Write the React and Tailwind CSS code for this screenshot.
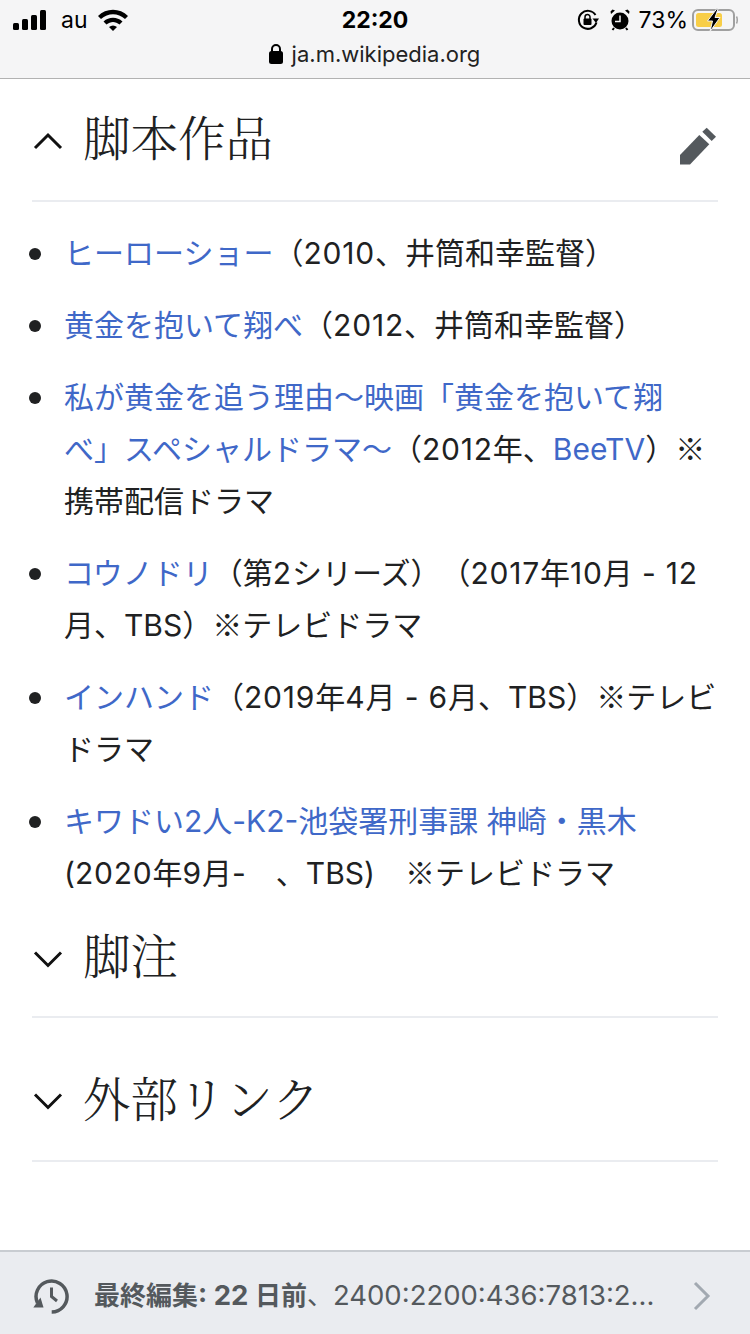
const body = { fontFamily: 'Inter,"Noto Sans CJK JP",sans-serif' };
const serif = { fontFamily: '"Noto Serif CJK JP","Liberation Serif","Noto Sans CJK JP",serif' };

function L({ children }) {
  return <span className="text-[#3f68c8]">{children}</span>;
}

function M() {
  return <span className="font-['Noto_Sans_CJK_JP'] leading-none">※</span>;
}

function N({ children }) {
  return <span className="tracking-[0.8px]">{children}</span>;
}

function Item({ children }) {
  return (
    <li className="flex">
      <span className="w-[35px] shrink-0 flex items-start pt-[21px]">
        <span className="w-[12px] h-[12px] rounded-full bg-[#202122] block" />
      </span>
      <div className="flex-1 text-[30px] leading-[52px] text-[#202122] [text-spacing-trim:space-all]">{children}</div>
    </li>
  );
}

function Chevron({ up }) {
  return (
    <svg width="32" height="20" viewBox="0 0 32 20" className="shrink-0 mt-[2px]">
      <path d={up ? "M3 17 L16 4 L29 17" : "M3 3.5 L16 16.5 L29 3.5"} fill="none" stroke="#111" strokeWidth="3" />
    </svg>
  );
}

function Heading({ up, title, edit, h }) {
  return (
    <div className={"mx-[32px] flex items-center border-b-2 border-[#eaecf0] " + h}>
      <Chevron up={up} />
      <h2 className="ml-[19px] pb-[7px] text-[47.5px] leading-none text-[#202122] font-light flex-1 [text-spacing-trim:space-all]" style={serif}>{title}</h2>
      {edit && (
        <svg width="36" height="38" viewBox="680 127 36 38" className="mr-[2px] mt-[12px]">
          <path d="M680 155 L699.3 135 L709.3 144.3 L690 164.5 L680 164.5 Z" fill="#54595d" />
          <path d="M702.3 131.7 L706.7 127.7 L716 136.7 L711.7 141 Z" fill="#54595d" />
        </svg>
      )}
    </div>
  );
}

export default function App() {
  return (
    <div className="w-[750px] h-[1334px] bg-white flex flex-col overflow-hidden" style={body}>
      <header className="h-[79px] shrink-0 bg-[#f5f5f6] border-b border-[#b2b2b2] pl-[13px] pr-[12px] text-black">
        <div className="h-[40px] flex items-center justify-between relative">
          <div className="flex items-center">
            <svg width="34" height="20" viewBox="0 0 34 20">
              <rect x="0" y="13" width="6" height="7" rx="1.5" fill="#000" />
              <rect x="9" y="9" width="6" height="11" rx="1.5" fill="#000" />
              <rect x="18" y="5" width="6" height="15" rx="1.5" fill="#000" />
              <rect x="27" y="0" width="6" height="20" rx="1.5" fill="#000" />
            </svg>
            <span className="ml-[14px] text-[23px] leading-none">au</span>
            <svg width="30" height="22" viewBox="0 0 30 22" className="ml-[10px]">
              <path d="M0 7 C8 -1.5 22 -1.5 30 7 L27 10 C20 3.5 10 3.5 3 10 Z" fill="#000" />
              <path d="M5.5 12.5 C11 7.5 19 7.5 24.5 12.5 L21.5 15.5 C17.5 12 12.5 12 8.5 15.5 Z" fill="#000" />
              <path d="M11 18 C13.5 16 16.5 16 19 18 L15 22 Z" fill="#000" />
            </svg>
          </div>
          <span className="absolute left-0 right-0 text-center text-[23px] leading-none font-bold pointer-events-none pr-[1px]">22:20</span>
          <div className="flex items-center">
            <svg width="22" height="22" viewBox="0 0 22 22">
              <path d="M18.5 6 A9 9 0 1 0 19.5 13.5" fill="none" stroke="#000" strokeWidth="2" />
              <path d="M15.5 9.5 L22 9.5 L19 14 Z" fill="#000" />
              <rect x="6.5" y="9.5" width="8" height="6.5" rx="1" fill="#000" />
              <path d="M8 10 V8 A2.5 2.5 0 0 1 13 8 V10" fill="none" stroke="#000" strokeWidth="1.5" />
            </svg>
            <svg width="20" height="22" viewBox="0 0 20 22" className="ml-[11px]">
              <circle cx="10" cy="12" r="8.5" fill="#000" />
              <path d="M10 6.5 V12.5 H5" fill="none" stroke="#f5f5f6" strokeWidth="1.5" />
              <path d="M1 5 L5 1.5 L2.5 0.5 L0.5 2.5 Z M19 5 L15 1.5 L17.5 0.5 L19.5 2.5 Z" fill="#000" />
              <path d="M4 19 L2.5 21 M16 19 L17.5 21" stroke="#000" strokeWidth="2" />
            </svg>
            <span className="ml-[9px] text-[23px] leading-none">73%</span>
            <svg width="46" height="24" viewBox="0 0 46 24" className="ml-[4px]">
              <rect x="1" y="2" width="41" height="20" rx="5" fill="none" stroke="#a0a0a0" strokeWidth="2" />
              <path d="M44.5 8.5 C45.5 10 45.5 14 44.5 15.5" fill="none" stroke="#a0a0a0" strokeWidth="1.5" />
              <rect x="4" y="5" width="26" height="14" rx="2.5" fill="#f8ce47" />
              <path d="M25 0.5 L15.5 13 H20.5 L18 23.5 L28 9.5 H23 L26 1 Z" fill="#000" stroke="#f5f5f6" strokeWidth="1" />
            </svg>
          </div>
        </div>
        <div className="flex items-center justify-center h-[28px] text-[22px] leading-none text-[#222] pr-[2px]">
          <svg width="14" height="20" viewBox="0 0 14 20" className="mr-[9px]">
            <rect x="0" y="7" width="14" height="13" rx="2.5" fill="#000" />
            <path d="M3 8 V5 A4 4 0 0 1 11 5 V8" fill="none" stroke="#000" strokeWidth="2" />
          </svg>
          <span>ja.m.wikipedia.org</span>
        </div>
      </header>

      <main className="flex-1">
        <Heading up title="脚本作品" edit h="h-[123px]" />
        <ul className="pl-[29px] pr-[32px] pt-[25px] flex flex-col gap-[20px]">
          <Item><L>ヒーローショー</L>（<N>2010</N>、井筒和幸監督）</Item>
          <Item><L>黄金を抱いて翔べ</L>（<N>2012</N>、井筒和幸監督）</Item>
          <Item><L>私が黄金を追う理由〜映画「黄金を抱いて翔べ」スペシャルドラマ〜</L>（<N>2012</N>年、<L>BeeTV</L>）<M />携帯配信ドラマ</Item>
          <Item><L>コウノドリ</L>（第<N>2</N>シリーズ）（<N>2017</N>年<N>10</N>月<N> - 12</N>月、TBS）<M />テレビドラマ</Item>
          <Item><L>インハンド</L>（<N>2019</N>年<N>4</N>月<N> - 6</N>月、TBS）<M />テレビドラマ</Item>
          <Item><L>キワドい2人-K2-池袋署刑事課 神崎・黒木</L><br />(<N>2020</N>年<N>9</N>月-　、TBS)　<M />テレビドラマ</Item>
        </ul>
        <Heading title="脚注" h="h-[119px]" />
        <div className="pt-[22px]">
          <Heading title="外部リンク" h="h-[122px]" />
        </div>
      </main>

      <footer className="h-[84px] shrink-0 bg-[#eaecf0] border-t-2 border-[#c8ccd1] flex items-center pt-[5px] pl-[33px] pr-[38px] text-[#54595d]">
        <svg width="38" height="36" viewBox="0 0 38 36" className="shrink-0">
          <path d="M4.5 25 A15.5 15.5 0 1 1 18.7 34" fill="none" stroke="#54595d" strokeWidth="3.5" />
          <path d="M0.3 29.5 L10.5 29.5 L7.5 19.5 Z" fill="#54595d" />
          <path d="M18.5 9.5 V18.5 L24 23" fill="none" stroke="#54595d" strokeWidth="3" />
        </svg>
        <div className="ml-[23px] flex-1 text-[26px] leading-none whitespace-nowrap">
          <b>最終編集<span className="text-[27.5px]">: 22 </span>日前</b>、<span className="text-[27.5px]">2400:2200:436:7813:2...</span>
        </div>
        <svg width="20" height="30" viewBox="0 0 20 30" className="shrink-0">
          <path d="M3 2 L16 15 L3 28" fill="none" stroke="#a2a9b1" strokeWidth="3" />
        </svg>
      </footer>
    </div>
  );
}
